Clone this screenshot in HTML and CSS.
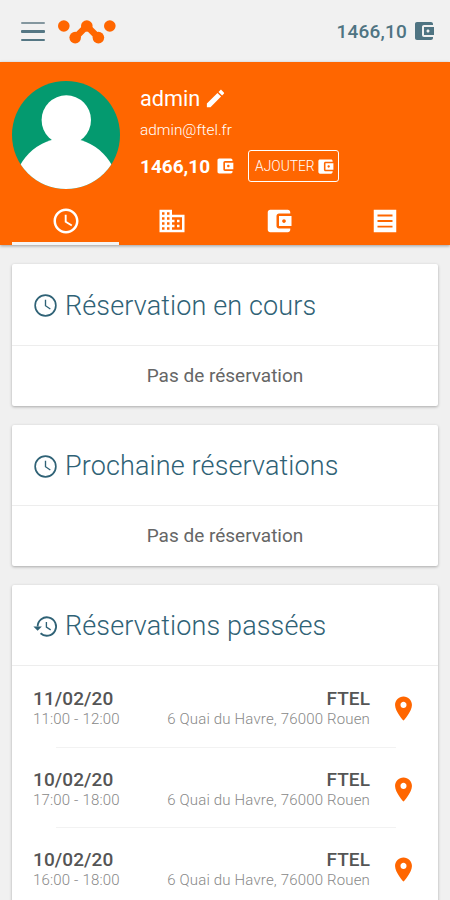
FILE: index.html
```html
<!DOCTYPE html>
<html lang="fr">
<head>
  <meta charset="UTF-8">
  <meta name="viewport" content="width=device-width, initial-scale=1.0">
  <title>Réservations</title>
  <link rel="stylesheet" href="styles.css">
</head>
<body>
<!-- icons -->
<svg class="sprite" width="0" height="0">
  <symbol id="wallet" viewBox="0 0 24 24">
    <path d="M21 18v1c0 1.1-.9 2-2 2H5c-1.11 0-2-.9-2-2V5c0-1.1.89-2 2-2h14c1.1 0 2 .9 2 2v1h-9c-1.11 0-2 .9-2 2v8c0 1.1.89 2 2 2h9zm-9-2h10V8H12v8zm4-2.5c-.83 0-1.5-.67-1.5-1.5s.67-1.5 1.5-1.5 1.5.67 1.5 1.5-.67 1.5-1.5 1.5z"/>
  </symbol>
  <symbol id="clock" viewBox="0 0 24 24">
    <path d="M11.99 2C6.47 2 2 6.48 2 12s4.47 10 9.99 10C17.52 22 22 17.52 22 12S17.52 2 11.99 2zM12 20c-4.42 0-8-3.58-8-8s3.58-8 8-8 8 3.58 8 8-3.58 8-8 8zm.5-13H11v6l5.25 3.15.75-1.23-4.5-2.67z"/>
  </symbol>
  <symbol id="clock-thin" viewBox="0 0 24 24">
    <circle cx="12" cy="12" r="9.2" fill="none" stroke="currentColor" stroke-width="1.5"/>
    <path d="M12 6.8v5.4l4.3 2.9" fill="none" stroke="currentColor" stroke-width="1.2"/>
  </symbol>
  <symbol id="history" viewBox="0 0 24 24">
    <path d="M5 12a8.2 8.2 0 1 1 2.6 6" fill="none" stroke="currentColor" stroke-width="1.6"/>
    <path d="M1.2 12h7.6L5 15.8z"/>
    <path d="M12.8 8v4.6l3.8 2.4" fill="none" stroke="currentColor" stroke-width="1.2"/>
  </symbol>
  <symbol id="building" viewBox="0 0 24 24">
    <path d="M12 7V3H2v18h20V7H12zM6 19H4v-2h2v2zm0-4H4v-2h2v2zm0-4H4V9h2v2zm0-4H4V5h2v2zm4 12H8v-2h2v2zm0-4H8v-2h2v2zm0-4H8V9h2v2zm0-4H8V5h2v2zm10 12h-8v-2h2v-2h-2v-2h2v-2h-2V9h8v10zm-2-8h-2v2h2v-2zm0 4h-2v2h2v-2z"/>
  </symbol>
  <symbol id="list" viewBox="0 0 24 24">
    <path d="M3 3v18h18V3H3zm15 14.2H6v-1.5h12v1.5zm0-4.4H6v-1.6h12v1.6zm0-4.5H6V6.8h12v1.5z"/>
  </symbol>
  <symbol id="pencil" viewBox="0 0 24 24">
    <path d="M3 17.25V21h3.75L17.81 9.94l-3.75-3.75L3 17.25zM20.71 7.04c.39-.39.39-1.02 0-1.41l-2.34-2.34c-.39-.39-1.02-.39-1.41 0l-1.83 1.83 3.75 3.75 1.83-1.83z"/>
  </symbol>
  <symbol id="pin" viewBox="0 0 24 24">
    <path d="M12 2C8.13 2 5 5.13 5 9c0 5.25 7 13 7 13s7-7.75 7-13c0-3.87-3.13-7-7-7zm0 9.5c-1.38 0-2.5-1.12-2.5-2.5s1.12-2.5 2.5-2.5 2.5 1.12 2.5 2.5-1.12 2.5-2.5 2.5z"/>
  </symbol>
</svg>

<header class="topbar">
  <div class="menu"><span></span><span></span><span></span></div>
  <svg class="logo" viewBox="0 0 58 24">
    <circle cx="5.8" cy="6" r="5.8"/>
    <circle cx="51.8" cy="6" r="5.8"/>
    <circle cx="28.8" cy="6" r="5.8"/>
    <circle cx="17.2" cy="17.6" r="5.8"/>
    <circle cx="40.4" cy="17.6" r="5.8"/>
    <path d="M17.2 17.6L28.8 6l11.6 11.6" fill="none" stroke="#ff6600" stroke-width="6.5"/>
  </svg>
  <div class="credit">1466,10 <svg class="icon"><use href="#wallet"/></svg></div>
</header>

<section class="profile">
  <div class="user">
    <svg class="avatar" viewBox="0 0 108 108">
      <defs><clipPath id="round"><circle cx="54" cy="54" r="54"/></clipPath></defs>
      <g clip-path="url(#round)">
        <rect width="108" height="108" fill="#049a6f"/>
        <circle cx="54.3" cy="39" r="24.7" fill="#fff"/>
        <circle cx="54" cy="109.5" r="52.5" fill="#fff"/>
      </g>
    </svg>
    <div class="info">
      <div class="name">admin <svg class="icon"><use href="#pencil"/></svg></div>
      <div class="email">admin@ftel.fr</div>
      <div class="balance">
        <span class="amount">1466,10</span>
        <svg class="icon"><use href="#wallet"/></svg>
        <button class="add"><span>AJOUTER</span><svg class="icon"><use href="#wallet"/></svg></button>
      </div>
    </div>
  </div>
  <nav class="tabs">
    <a class="tab active"><svg class="icon"><use href="#clock"/></svg></a>
    <a class="tab"><svg class="icon"><use href="#building"/></svg></a>
    <a class="tab"><svg class="icon"><use href="#wallet"/></svg></a>
    <a class="tab"><svg class="icon"><use href="#list"/></svg></a>
  </nav>
</section>

<main>
  <section class="card">
    <h2><svg class="icon"><use href="#clock-thin"/></svg>Réservation en cours</h2>
    <p class="empty">Pas de réservation</p>
  </section>

  <section class="card">
    <h2><svg class="icon"><use href="#clock-thin"/></svg>Prochaine réservations</h2>
    <p class="empty">Pas de réservation</p>
  </section>

  <section class="card">
    <h2><svg class="icon"><use href="#history"/></svg>Réservations passées</h2>
    <div class="row">
      <div class="when"><b>11/02/20</b><small>11:00 - 12:00</small></div>
      <div class="where"><b>FTEL</b><small>6 Quai du Havre, 76000 Rouen</small></div>
      <svg class="icon"><use href="#pin"/></svg>
    </div>
    <div class="row">
      <div class="when"><b>10/02/20</b><small>17:00 - 18:00</small></div>
      <div class="where"><b>FTEL</b><small>6 Quai du Havre, 76000 Rouen</small></div>
      <svg class="icon"><use href="#pin"/></svg>
    </div>
    <div class="row">
      <div class="when"><b>10/02/20</b><small>16:00 - 18:00</small></div>
      <div class="where"><b>FTEL</b><small>6 Quai du Havre, 76000 Rouen</small></div>
      <svg class="icon"><use href="#pin"/></svg>
    </div>
  </section>
</main>
</body>
</html>
```

FILE: styles.css
```css
* {
  box-sizing: border-box;
}
body {
  margin: 0;
  height: 900px;
  overflow: hidden;
  font-family: Roboto, "Liberation Sans", sans-serif;
  background-color: #f0f0f0;
  color: #555;
}
.sprite {
  display: block;
}
.icon {
  display: block;
  flex: none;
  width: 24px;
  height: 24px;
  fill: currentColor;
}

/* top bar */
.topbar {
  display: flex;
  align-items: center;
  height: 62px;
  padding: 0 14px 0 21px;
  color: #4f7482;
  background-color: #f1f1f1;
}
.menu {
  display: flex;
  flex-direction: column;
  gap: 6px;
  width: 24px;
  margin-top: 1px;
}
.menu span {
  height: 2.5px;
  border-radius: 1px;
  background-color: #557784;
}
.menu span:first-child {
  background-color: #84979f;
}
.logo {
  width: 58px;
  height: 24px;
  margin-left: 13px;
  margin-top: 1px;
  fill: #ff6600;
}
.credit {
  display: flex;
  align-items: center;
  gap: 5px;
  margin-left: auto;
  font-size: 19px;
  font-weight: 500;
  letter-spacing: 0.2px;
}

/* profile */
.profile {
  display: flex;
  flex-direction: column;
  justify-content: space-between;
  height: 183px;
  padding: 19px 11px 0 12.4px;
  color: #fff;
  background-color: #ff6600;
  box-shadow: 0 1px 3px rgba(0,0,0,0.35);
}
.user {
  display: flex;
  gap: 19.6px;
}
.avatar {
  width: 108px;
  height: 108px;
}
.info {
  padding-top: 4px;
}
.name {
  display: flex;
  align-items: center;
  gap: 4px;
  height: 27px;
  font-size: 21.7px;
}
.name .icon {
  width: 23px;
  height: 23px;
}
.email {
  height: 36px;
  line-height: 36px;
  font-size: 15.4px;
  font-weight: 300;
}
.balance {
  display: flex;
  align-items: center;
  height: 36px;
}
.amount {
  font-size: 19px;
  font-weight: 700;
}
.balance > .icon {
  width: 20px;
  height: 20px;
  margin-left: 5px;
}
.add {
  display: flex;
  align-items: center;
  gap: 1px;
  width: 91px;
  height: 32px;
  margin-left: 13px;
  padding: 0 5px 0 6px;
  font-family: inherit;
  font-size: 13.8px;
  font-weight: 300;
  color: #fff;
  background: none;
  border: 1.5px solid #fff;
  border-radius: 3px;
}
.add .icon {
  width: 19px;
  height: 19px;
}
.tabs {
  display: grid;
  grid-template-columns: repeat(4, 106.6px);
}
.tab {
  display: flex;
  justify-content: center;
  height: 39px;
  border-bottom: 3px solid transparent;
}
.tab.active {
  border-color: #f4f4f4;
}
.tab .icon {
  width: 30px;
  height: 30px;
}

/* cards */
main {
  padding: 19px 12px 0;
}
.card {
  margin-bottom: 19px;
  background-color: #fff;
  border-radius: 2px;
  box-shadow: 0 1px 3px rgba(0,0,0,0.3);
}
.card:first-child {
  padding-bottom: 1px;
}
h2 {
  display: flex;
  align-items: center;
  gap: 6px;
  height: 82px;
  margin: 0;
  padding: 2px 20px 0;
  font-size: 27px;
  font-weight: 300;
  letter-spacing: 0.13px;
  color: #2f6276;
  border-bottom: 1px solid #ededed;
}
.card + .card h2 {
  height: 81px;
}
h2 .icon {
  width: 27px;
  height: 27px;
}
.empty {
  height: 59px;
  margin: 0;
  line-height: 59px;
  font-size: 19px;
  text-align: center;
  color: #666;
}
.card + .card .empty {
  height: 60px;
}
.row {
  display: flex;
  align-items: center;
  height: 80px;
  padding: 2px 20px 0 21px;
}
.row:first-of-type {
  height: 82px;
}
/* inset divider between rows */
.row:not(:last-child) {
  background: linear-gradient(#f2f2f2, #f2f2f2) 44px 100% / 340px 1px no-repeat;
}
.row b,
.row small {
  display: block;
}
.row b {
  height: 21px;
  line-height: 21px;
  font-size: 19px;
  font-weight: 500;
  letter-spacing: 0.1px;
}
.row small {
  height: 20px;
  line-height: 20px;
  font-size: 15px;
  font-weight: 300;
  letter-spacing: 0.17px;
  color: #888;
}
.where {
  margin-left: auto;
  margin-right: 19px;
  text-align: right;
}
.row .icon {
  width: 29px;
  height: 29px;
  color: #ff6600;
}
```
